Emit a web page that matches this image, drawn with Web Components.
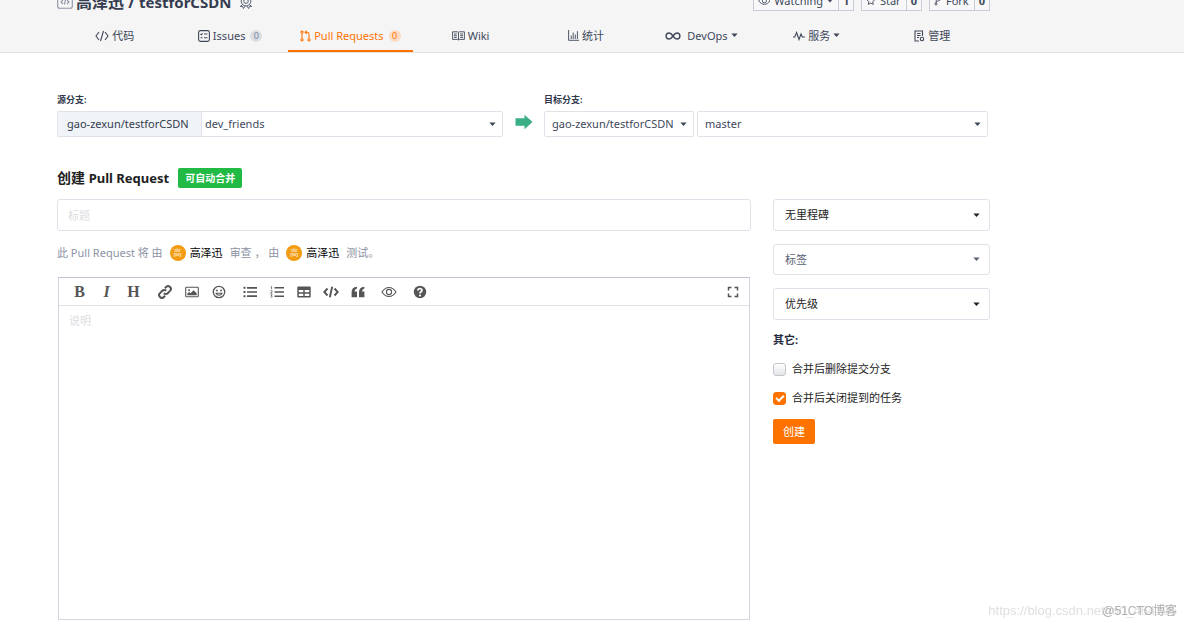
<!DOCTYPE html>
<html lang="zh-CN">
<head>
<meta charset="utf-8">
<title>创建 Pull Request</title>
<style>
html,body{margin:0}
body{
  --ui:"Noto Sans","Noto Sans CJK SC",sans-serif;
  --ink:#40485b;--line:#dfe2e8;--orange:#fe7300;--left:57px;--content:933px;
  font:11px/16px var(--ui);color:var(--ink);background:#fff;overflow:hidden
}
</style>
</head>
<body>
<pr-page></pr-page>
<script>
const ICONS = {
  code:['0 0 14 12','<path d="M4 2 1 6l3 4M10 2l3 4-3 4M8.5 1l-3 10"/>'],
  repo:['0 0 16 14','<rect x=".7" y=".7" width="14.6" height="12.6" rx="2"/><path d="M6 5 4 7l2 2M10 5l2 2-2 2M8.6 4.5l-1.2 5"/>'],
  medal:['0 0 16 16','<circle cx="8" cy="7" r="5.5"/><circle cx="8" cy="7" r="2.6"/><path d="M4.200 11 1.500 13l2.700.3.800 2.200L7 12.500M11.800 11l2.700 2-2.700.3-.8 2.200-2-3"/>'],
  issues:['0 0 12 12','<rect x=".6" y=".6" width="10.8" height="10.8" rx="1.8"/><path d="m2.500 4 .8.8L4.700 3.300M6 4h3.500M2.500 7.800h2M6 7.800h3.500"/>'],
  pull:['0 0 11 12','<circle cx="2" cy="2.200" r="1.100"/><circle cx="2" cy="9.800" r="1.100"/><circle cx="9" cy="9.800" r="1.100"/><path d="M2 3.500v5M9 8.500V4c0-1.200-.7-1.800-1.800-1.800H5.200M6.700.6 5 2.200l1.700 1.600"/>'],
  wiki:['0 0 13 10','<path d="M.6.8h5l.9.6.9-.6h5v7.600h-5l-.9.6-.9-.6h-5zM6.500 1.400V9M2 3h2.800M2 4.700h2.800M2 6.400h2.800M8.200 3H11M8.200 4.700H11M8.200 6.400H11" stroke-width=".9"/>'],
  chart:['0 0 11 11','<path d="M.6 0v10.300H11M3.200 9V5.500M5.200 9V2.500M7.300 9V4.500M9.400 9V1.200" stroke-width=".9"/>'],
  infinity:['0 0 16 10','<path stroke-width="1.400" d="M8 5C6.700 3 5.600 2 4.100 2a3 3 0 0 0 0 6C5.600 8 6.700 7 8 5s2.400-3 3.900-3a3 3 0 0 1 0 6C10.400 8 9.300 7 8 5"/>'],
  pulse:['0 0 12 10','<path d="M0 6h1.800L3.600 1.500 6 8.500 8 3l1.300 3H12"/>'],
  manage:['0 0 11 12','<path d="M5 11H1V1h7.500v5M3 3.500h3.600M3 5.500h3.600M3 7.500h2"/><circle cx="8" cy="9" r="1.700"/>'],
  eye:['0 0 16 12','<path d="M1 6c3.800-6 10.200-6 14 0-3.800 6-10.200 6-14 0z"/><circle cx="8" cy="6" r="2.600"/>'],
  star:['0 0 12 12','<path d="m6 1 1.500 3.200 3.500.4-2.600 2.400.7 3.500L6 8.800l-3.100 1.700.7-3.500L1 4.600l3.500-.4z"/>'],
  fork:['0 0 10 12','<circle cx="3" cy="2.200" r="1.400"/><circle cx="8" cy="3" r="1.200"/><circle cx="2.500" cy="10" r="1.300"/><path d="M3 3.600 2.600 8.700M8 4.200c0 2.500-4.500 1-5.200 4"/>'],
  caret:['0 0 8 5','<path stroke="none" fill="currentColor" d="M.4.500h7.200L4 4.500z"/>'],
  arrow:['0 0 18 16','<path stroke="none" fill="#3aaf85" d="M.5 4.200h9V.8L17.500 8l-8 7.200v-3.400h-9z"/>'],
  link:['0 0 14 14','<path stroke-width="2" d="M5.800 8.200a2.700 2.700 0 0 0 3.900 0l2.300-2.300a2.700 2.700 0 0 0-3.900-3.900L6.900 3.200M8.200 5.800a2.700 2.700 0 0 0-3.900 0L2 8.100A2.700 2.700 0 0 0 5.900 12l1.200-1.200"/>'],
  image:['0 0 14 12','<rect x=".7" y="1.200" width="12.6" height="9.6" rx=".8"/><circle cx="4" cy="4.200" r="1" fill="currentColor" stroke="none"/><path stroke="none" fill="currentColor" d="M2.300 9.300V7.800L4.200 6l1.300 1.200L8.500 4.300l3.200 3v2z"/>'],
  smile:['0 0 14 14','<circle cx="7" cy="7" r="5.700" stroke-width="1.300"/><circle cx="5" cy="5.500" r=".9" fill="currentColor" stroke="none"/><circle cx="9" cy="5.500" r=".9" fill="currentColor" stroke="none"/><path d="M4 8.300c1.300 2.600 4.700 2.600 6 0z"/>'],
  ul:['0 0 14 12','<path stroke-width="1.700" d="M4 1.800h10M4 6h10M4 10.200h10"/><path stroke-width="2" d="M.5 1.800h2M.5 6h2M.5 10.200h2"/>'],
  ol:['0 0 14 12','<path stroke-width="1.600" d="M4.500 1.800H14M4.500 6H14M4.500 10.200H14"/><path stroke-width=".8" d="m.8 1 .8-.5v2.700M.6 4.800h1.500v.8L.6 7.200h1.700M.6 8.800h1.600L1.300 10c1.300 0 1 1.500-.8 1.200"/>'],
  table:['0 0 14 12','<path stroke="none" fill="currentColor" fill-rule="evenodd" d="M1.300.5h11.400c.6 0 1 .4 1 1v9c0 .6-.4 1-1 1H1.300c-.6 0-1-.4-1-1v-9c0-.6.4-1 1-1zM1.800 4v2.300h4.500V4zm5.900 0v2.300h4.500V4zM1.800 7.700V10h4.500V7.700zm5.900 0V10h4.500V7.700z"/>'],
  codebold:['0 0 16 12','<path stroke-width="1.900" d="M4.500 2.500 1.300 6l3.200 3.500M11.500 2.500 14.700 6l-3.200 3.500M9.200.8 6.800 11.200"/>'],
  quote:['0 0 14 12','<path stroke="none" fill="currentColor" d="M6 .8v1.600c-1.600.5-2.300 1.500-2.300 3.200H6v5.600H.6V6C.6 3 2.400 1 6 .8zM13.400.8v1.600c-1.600.5-2.300 1.500-2.300 3.200h2.300v5.600H8V6C8 3 9.800 1 13.400.8z"/>'],
  help:['0 0 14 14','<circle cx="7" cy="7" r="6.200" fill="currentColor" stroke="none"/><path stroke="#fff" stroke-width="1.700" d="M4.900 5.500C5 3 9.100 3.200 9 5.400c0 1.400-2 1.400-2 3"/><circle cx="7" cy="10.500" r="1.100" fill="#fff" stroke="none"/>'],
  full:['0 0 12 12','<path stroke-width="1.500" d="M1.500 4.500v-3h3M7.500 1.500h3v3M10.500 7.500v3h-3M4.500 10.500h-3v-3"/>']
};
const define = (name, html, setup) => {
  const t = document.createElement('template');
  t.innerHTML = html;
  customElements.define(name, class extends HTMLElement {
    constructor(){
      super();
      this.attachShadow({mode:'open'}).append(t.content.cloneNode(true));
    }
    connectedCallback(){ if (setup) setup(this, this.shadowRoot); }
  });
};

define('ui-icon', `<style>
:host{display:inline-flex;flex:none}
svg{display:block;fill:none;stroke:currentColor;stroke-width:1.1}
</style><svg aria-hidden="true"></svg>`, (el, root) => {
  const [box, body] = ICONS[el.getAttribute('name')];
  const [, , w, h] = box.split(' ');
  const k = Number(el.getAttribute('scale') || 1);
  const svg = root.querySelector('svg');
  svg.setAttribute('viewBox', box);
  svg.setAttribute('width', w * k);
  svg.setAttribute('height', h * k);
  svg.innerHTML = body;
});

define('nav-tab', `<style>
:host{display:flex;flex:1 1 0}
:host([active]){min-width:125px}
a{flex:1;display:flex;align-items:center;justify-content:center;gap:3px;color:inherit;text-decoration:none;white-space:nowrap;box-sizing:border-box;height:33px;padding-top:2px;border-bottom:2px solid transparent}
:host([active]) a{color:var(--orange);border-color:var(--orange)}
.i{display:flex}
:host([wide]) .i{margin-right:3px}
.n{display:none;margin-left:2px;width:12px;height:12px;border-radius:6px;background:#dcdee2;color:#7487a6;font-size:9px;line-height:12px;text-align:center}
:host([count]) .n{display:block}
:host([active]) .n{background:#fcdcc4;color:var(--orange)}
.c{display:none}
:host([menu]) .c{display:inline-flex}
</style><a href="#"><span class="i"></span><span><slot></slot></span><span class="n"></span><ui-icon class="c" name="caret" scale=".875"></ui-icon></a>`,
(el, root) => {
  root.querySelector('.i').innerHTML = `<ui-icon name="${el.getAttribute('icon')}"></ui-icon>`;
  root.querySelector('.n').textContent = el.getAttribute('count') || '';
});

define('repo-action', `<style>
:host{display:flex}
button{font:inherit;color:inherit;background:#f8f8f9;border:1px solid #c9ccd8;height:20px;padding:0 5px 0 4px;display:flex;align-items:center;gap:4px}
button+button{border-left:0;padding:0 4px;font-weight:700}
.i{display:flex}
.c{display:none}:host([menu]) .c{display:flex}
</style><button type="button"><span class="i"></span><slot></slot><ui-icon class="c" name="caret" scale=".75"></ui-icon></button><button type="button" class="n"></button>`,
(el, root) => {
  root.querySelector('.i').innerHTML = `<ui-icon name="${el.getAttribute('icon')}" scale=".8"></ui-icon>`;
  root.querySelector('.n').textContent = el.getAttribute('count');
});

define('repo-header', `<style>
:host{display:block;background:#f5f5f5;border-bottom:1px solid #e3e3e3;padding-left:var(--left);overflow:hidden}
.in{max-width:var(--content)}
.top{display:flex;align-items:center;justify-content:space-between;height:32px;margin-top:-14px;margin-bottom:1px}
h1{margin:0;font-size:16px;line-height:24px;display:flex;align-items:center;gap:3px;color:#343c50}
h1 ui-icon{color:#8d95a6}
h1 .m{margin-left:5px;color:#555d70}
h1 a{color:inherit;text-decoration:none}
h1 span{font-size:15px}
.acts{display:flex;gap:7px;margin-bottom:2px}
nav{display:flex}
</style><div class="in"><div class="top"><h1><ui-icon name="repo"></ui-icon><a href="#">高泽迅 / <span>testforCSDN</span></a><ui-icon class="m" name="medal" scale=".875"></ui-icon></h1>
<div class="acts"><repo-action icon="eye" count="1" menu>Watching</repo-action><repo-action icon="star" count="0">Star</repo-action><repo-action icon="fork" count="0">Fork</repo-action></div></div>
<nav><nav-tab icon="code">代码</nav-tab><nav-tab icon="issues" count="0">Issues</nav-tab><nav-tab icon="pull" count="0" active>Pull Requests</nav-tab><nav-tab icon="wiki">Wiki</nav-tab><nav-tab icon="chart">统计</nav-tab><nav-tab icon="infinity" menu wide>DevOps</nav-tab><nav-tab icon="pulse" menu>服务</nav-tab><nav-tab icon="manage">管理</nav-tab></nav></div>`);

define('ui-select', `<style>
:host{display:grid;align-items:center;box-sizing:border-box;height:26px;border:1px solid var(--line);border-radius:2px;background:#fff}
select,ui-icon{grid-area:1/1}
select{appearance:none;border:0;background:none;font:inherit;color:inherit;width:100%;height:100%;padding:0 20px 0 var(--pad,7px);margin:0}
ui-icon{justify-self:end;margin-right:var(--caret,6px);pointer-events:none}
</style><select><option></option></select><ui-icon name="caret" scale=".875"></ui-icon>`,
(el, root) => {
  root.querySelector('option').textContent = el.getAttribute('value');
  root.querySelector('select').setAttribute('aria-label', el.getAttribute('label'));
});

define('branch-picker', `<style>
:host{display:grid;grid-template-columns:446fr 41px 444fr;margin-right:2px}
.l{font-size:9px;line-height:14px;font-weight:700;color:#30384d;margin-bottom:4px}
.row{display:flex}
.own{box-sizing:border-box;height:26px;line-height:24px;padding:0 9px;border:1px solid var(--line);border-right:0;border-radius:2px 0 0 2px;background:#f0f3f7;color:#333b4d;white-space:nowrap;width:144px}
.fill{flex:1}
.src .fill{--pad:3px;border-radius:0 2px 2px 0}
.dst{gap:3px}
.repo{width:150px}
.arrow{align-self:end;justify-self:center;margin-bottom:7px}
</style>
<div><div class="l">源分支:</div><div class="row src"><span class="own">gao-zexun/testforCSDN</span><ui-select class="fill" label="源分支" value="dev_friends"></ui-select></div></div>
<ui-icon class="arrow" name="arrow"></ui-icon>
<div><div class="l">目标分支:</div><div class="row dst"><ui-select class="repo" label="目标仓库" value="gao-zexun/testforCSDN"></ui-select><ui-select class="fill" label="目标分支" value="master"></ui-select></div></div>`);

define('user-chip', `<style>
:host{display:inline-flex;align-items:center;gap:4px;color:#000}
i{width:16px;height:16px;border-radius:8px;background:#f39c12;color:#fde6c0;font-style:normal;font-size:9px;line-height:16px;text-align:center}
a{color:inherit;text-decoration:none}
</style><i>高</i><a href="#"><slot></slot></a>`);

define('tool-button', `<style>
:host{display:flex}
button{width:27px;height:27px;border:0;padding:0;background:none;color:#555;display:flex;align-items:center;justify-content:center;font:bold 16px/20px "Liberation Serif",serif}
:host([italic]) button{font-style:italic}
</style><button type="button"><slot></slot></button>`,
(el, root) => {
  root.querySelector('button').setAttribute('aria-label', el.getAttribute('label'));
});

define('md-editor', `<style>
:host{display:flex;flex-direction:column;box-sizing:border-box;height:343px;border:1px solid #d3d6de;border-top-color:#c3c6d2;margin:0 1px}
.bar{display:flex;gap:4px;padding:0 3px 0 7px;height:27px;border-bottom:1px solid var(--line)}
.g{display:flex}.end{margin-left:auto}
textarea{flex:1;border:0;outline:0;resize:none;padding:7px 10px;font:inherit;color:inherit;background:none}
textarea::placeholder{color:#dcdcdf}
</style><div class="bar" role="toolbar">
<div class="g"><tool-button label="粗体">B</tool-button><tool-button label="斜体" italic>I</tool-button><tool-button label="标题">H</tool-button></div>
<div class="g"><tool-button label="链接"><ui-icon name="link"></ui-icon></tool-button><tool-button label="图片"><ui-icon name="image"></ui-icon></tool-button><tool-button label="表情"><ui-icon name="smile"></ui-icon></tool-button></div>
<div class="g"><tool-button label="无序列表"><ui-icon name="ul"></ui-icon></tool-button><tool-button label="有序列表"><ui-icon name="ol"></ui-icon></tool-button><tool-button label="表格"><ui-icon name="table"></ui-icon></tool-button><tool-button label="代码"><ui-icon name="codebold"></ui-icon></tool-button><tool-button label="引用"><ui-icon name="quote"></ui-icon></tool-button></div>
<tool-button label="预览"><ui-icon name="eye"></ui-icon></tool-button><tool-button label="帮助"><ui-icon name="help"></ui-icon></tool-button>
<tool-button class="end" label="全屏"><ui-icon name="full"></ui-icon></tool-button></div>
<textarea placeholder="说明" aria-label="说明"></textarea>`);

define('ui-check', `<style>
:host{display:block}
label{display:flex;align-items:center;gap:6px;color:#222;line-height:16px}
input{appearance:none;box-sizing:border-box;flex:none;margin:0;width:13px;height:13px;border:1px solid #c4c6cb;border-radius:3px;background:linear-gradient(#fff,#e2e4e8);display:grid;place-items:center}
input:checked{background:var(--orange);border-color:var(--orange)}
input:checked::before{content:"";width:6px;height:3px;border:solid #fff;border-width:0 0 2px 2px;transform:translateY(-1px) rotate(-45deg)}
</style><label><input type="checkbox"><span><slot></slot></span></label>`,
(el, root) => { root.querySelector('input').checked = el.hasAttribute('checked'); });

define('pr-side', `<style>
:host{display:flex;flex-direction:column;color:#222}
ui-select{height:32px;margin-bottom:13px;--pad:11px;--caret:9px;border-radius:3px}
ui-select.tag{color:#596075;height:31px}
h3{margin:-1px 0 13px;font-size:11px;line-height:16px;color:#262d40}
ui-check{margin-bottom:13px}
button{align-self:flex-start;margin:0;height:25px;padding:0 10px;border:0;border-radius:2px;background:var(--orange);color:#fff;font:inherit}
</style><ui-select label="里程碑" value="无里程碑"></ui-select><ui-select class="tag" label="标签" value="标签"></ui-select><ui-select label="优先级" value="优先级"></ui-select>
<h3>其它:</h3><ui-check>合并后删除提交分支</ui-check><ui-check checked>合并后关闭提到的任务</ui-check><button type="submit">创建</button>`);

define('pr-form', `<style>
:host{display:block}
.head{display:flex;align-items:center;gap:9px;margin:31px 0 11px}
h2{margin:0;font-size:14px;line-height:20px;color:#222}
h2 span{font-size:13px}
.ok{background:#21ba45;color:#fff;font-size:10px;line-height:20px;font-weight:700;padding:0 7px;border-radius:2px}
form{display:grid;grid-template-columns:minmax(0,1fr) 217px;gap:22px}
input{box-sizing:border-box;display:block;width:100%;height:32px;margin:0;border:1px solid var(--line);border-radius:3px;padding:0 10px;font:inherit;outline:0}
input::placeholder{color:#dcdcdf}
p{margin:14px 0 16px;display:flex;align-items:center;gap:7px;color:#8c92a4;line-height:16px}
</style><div class="head"><h2>创建 <span>Pull Request</span></h2><span class="ok">可自动合并</span></div>
<form><div><input type="text" placeholder="标题" aria-label="标题"><p><span>此 Pull Request 将 由</span><user-chip>高泽迅</user-chip><span>审查 ， 由</span><user-chip>高泽迅</user-chip><span>测试。</span></p><md-editor></md-editor></div><pr-side></pr-side></form>`);

define('page-mark', `<style>
:host{position:fixed;right:7px;bottom:4px;display:grid;font:13px/20px "Liberation Sans","Noto Sans CJK SC",sans-serif;pointer-events:none;white-space:nowrap}
span{grid-area:1/1}
.u{color:#e0e0e0}
.b{justify-self:end;color:#b0b0b0;font-size:12px}
</style><span class="u">https://blog.csdn.net/m0_464195</span><span class="b">@51CTO博客</span>`);

define('pr-page', `<style>
:host{display:block}
main{padding:40px 0 0 var(--left)}
.in{max-width:var(--content)}
</style><repo-header></repo-header><main><div class="in"><branch-picker></branch-picker><pr-form></pr-form></div></main><page-mark></page-mark>`);
</script>
</body>
</html>
